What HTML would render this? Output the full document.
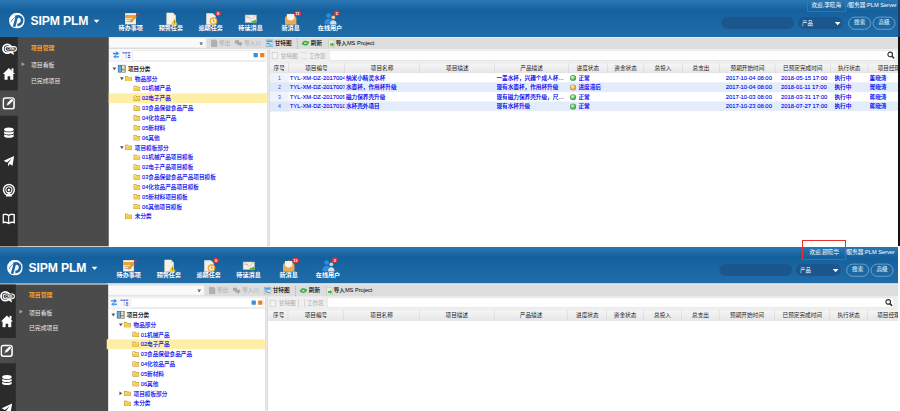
<!DOCTYPE html>
<html lang="zh-CN"><head><meta charset="utf-8"><title>SIPM PLM</title>
<style>
*{box-sizing:border-box}
html,body{margin:0;padding:0;overflow:hidden}
html{width:900px;height:411px}
body{width:900px;height:411px;overflow:hidden;background:#fff;position:relative;font-family:"Liberation Sans","Noto Sans CJK SC",sans-serif}
.scr{position:absolute;width:1920px;transform:scale(0.46875);transform-origin:0 0;overflow:hidden;background:#fff;font-size:12px;color:#000}
.scr div,.scr span,.scr svg{position:absolute}
.hdr{left:0;top:0;width:1920px;height:79px;background:linear-gradient(to bottom,#2b77b2 0px,#236fab 8px,#14609c 23px,#1a66a2 45px,#206ca8 79px)}
.logo{left:19px;top:27px;width:34px;height:34px}
.brand{left:65px;top:29px;font-weight:bold;font-size:26px;color:#fff;letter-spacing:-0.3px;line-height:30px;white-space:nowrap}
.tri{width:0;height:0;border-left:6.5px solid transparent;border-right:6.5px solid transparent;border-top:7px solid #fff}
.hi{top:27px;width:26px;height:26px;overflow:visible}
.hl{top:52px;width:90px;text-align:center;color:#fff;font-size:13px;font-weight:bold;line-height:16px;white-space:nowrap}
.wel{top:2px;color:#fff;font-size:12px;line-height:16px;white-space:nowrap}
.sin{background:#1b568c;border-radius:13px;top:36px;height:26px}
.pill{top:36px;height:27px;border:1.5px solid #c9dcec;border-radius:14px;color:#fff;font-size:12px;line-height:23px;text-align:center}
.tb{left:232px;top:79px;width:1688px;height:26px;background:#dddddd;border-top:2.5px solid #e6ecee}
.tbt{top:84px;font-size:12px;line-height:16px;white-space:nowrap;font-weight:500}
.side0{left:0;top:79px;width:37.5px;background:#2b2b2b}
.side1{left:0;top:79px;width:232px;background:#4b4b4b}
.sm{left:66px;font-size:12.5px;color:#e8e8e8;line-height:16px;white-space:nowrap}
.trow{left:232px;width:338px;height:21px}
.tn{font-size:12px;line-height:21px;top:1px;color:#0000f0;font-weight:400;-webkit-text-stroke:0.2px;white-space:nowrap}
.gh{top:133.5px;height:22.5px;font-size:12px;line-height:25px;text-align:center;color:#222;white-space:nowrap;border-right:1px solid #d0d0d0}
.gc{font-size:12px;line-height:20px;color:#0000f0;font-weight:500;-webkit-text-stroke:0.2px #0000f0;white-space:nowrap;overflow:hidden;text-overflow:ellipsis;height:20px;top:0}
</style></head><body>
<div class="scr" style="left:0;top:0;height:526px"><div class="hdr"></div><svg class="logo" viewBox="0 0 34 34"><circle cx="17" cy="17" r="16.6" fill="#fff"/><path d="M14 9C22 5.5 28.800 10.5 28 17.5C27.3 22.5 23.5 25.800 18 26.5" fill="none" stroke="#1d67a5" stroke-width="5.6"/><path d="M17 8.5L11 30" stroke="#1d67a5" stroke-width="5.4" fill="none"/><path d="M4.5 20C7 14 11 10.5 15 9" stroke="#1d67a5" stroke-width="1.5" fill="none"/></svg><div class="brand">SIPM PLM</div><div class="tri" style="left:200px;top:42px"></div><svg class="hi" style="left:267px" viewBox="0 0 26 26"><rect x="0" y="1" width="23" height="24" fill="#f4f1ea"/><rect x="0" y="5" width="23" height="7" fill="#f0a030"/><rect x="3" y="14" width="14" height="2" fill="#b8a890"/><rect x="3" y="18" width="14" height="2" fill="#b8a890"/><path d="M22 6l3 3-11 11-4 1 1-4z" fill="#e8901c"/><circle cx="26.5" cy="3" r="2.6" fill="#e53030"/></svg><div class="hl" style="left:234px">待办事项</div><svg class="hi" style="left:352.5px" viewBox="0 0 26 26"><path d="M2 0h14l6 6v20H2z" fill="#f6f1e4"/><path d="M16 0l6 6h-6z" fill="#d8d0bc"/><path d="M19 12l7 14H12z" fill="#f2c830"/><rect x="18.3" y="17" width="1.5" height="5" fill="#7a5a10"/></svg><div class="hl" style="left:319.5px">预警任务</div><svg class="hi" style="left:437.5px;overflow:visible" viewBox="0 0 26 26"><path d="M2 1h14l6 6v19H2z" fill="#f3efe6"/><circle cx="17.5" cy="18" r="7" fill="#f6e9c8" stroke="#e8a020" stroke-width="2.4"/><path d="M17.5 14v4.5h3" stroke="#b07818" stroke-width="1.3" fill="none"/><ellipse cx="27.3" cy="1.4" rx="6" ry="5.5" fill="#e53030"/><text x="27.3" y="4.6" font-size="8.5" font-weight="bold" fill="#fff" text-anchor="middle" font-family="Liberation Sans, sans-serif">0</text></svg><div class="hl" style="left:404.5px">逾期任务</div><svg class="hi" style="left:522.5px" viewBox="0 0 26 26"><rect x="0" y="5" width="24" height="16" fill="#f1efe8" stroke="#c8c4b4" stroke-width="1"/><path d="M0 5l12 9 12-9" fill="none" stroke="#b5b09c" stroke-width="1.2"/><rect x="3" y="9" width="7" height="2" fill="#e0b090"/><path d="M14 17h6v-3l6 5-6 5v-3h-6z" fill="#5cb030"/></svg><div class="hl" style="left:489.5px">待读消息</div><svg class="hi" style="left:608px;overflow:visible" viewBox="0 0 26 26"><path d="M0 9l12-8 12 8v16H0z" fill="#d89648"/><rect x="4" y="3" width="16" height="14" fill="#f7f4ee"/><path d="M0 10l12 9 12-9v15H0z" fill="#e8aa58"/><rect x="19.800" y="-4.2" width="14.6" height="11.2" rx="5.4" fill="#e53030"/><text x="27.100" y="4.6" font-size="8.5" font-weight="bold" fill="#fff" text-anchor="middle" font-family="Liberation Sans, sans-serif">11</text></svg><div class="hl" style="left:575px">新消息</div><svg class="hi" style="left:692px;overflow:visible" viewBox="0 0 26 26"><circle cx="9" cy="6" r="5" fill="#2f8de0"/><path d="M0 24c0-8 4-11 9-11s9 3 9 11z" fill="#2f8de0"/><circle cx="19" cy="10" r="4" fill="#e8c8a8"/><path d="M12 25c0-6 3-9 7-9s7 3 7 9z" fill="#d8dde4"/><ellipse cx="26.5" cy="0.900" rx="6" ry="5.6" fill="#e53030"/><text x="26.5" y="4" font-size="8.5" font-weight="bold" fill="#fff" text-anchor="middle" font-family="Liberation Sans, sans-serif">2</text></svg><div class="hl" style="left:659px">在线用户</div><div class="wel" style="left:1731px">欢迎,李晓海</div><div class="wel" style="left:1807px">/服务器:PLM Server</div><div class="sin" style="left:1539px;width:155px"></div><div class="sin" style="left:1702px;width:96px"></div><div class="wel" style="left:1711px;top:41.5px;font-size:11.5px">产品</div><div class="tri" style="left:1781px;top:47px;border-left-width:6px;border-right-width:6px;border-top-width:7px"></div><div class="pill" style="left:1810px;width:48px">搜索</div><div class="pill" style="left:1862px;width:48px">高级</div><div class="tb"></div><div style="left:0;top:0px;width:1920px;height:526px"><div style="left:232px;top:81px;width:208px;height:21px;background:#fafafa;border:1px solid #e4e4e4"></div><div style="left:426px;top:85px;font-size:11px;line-height:12px;color:#333;font-weight:bold">v</div><svg style="left:450px;top:84px" width="14" height="16" viewBox="0 0 14 16"><path d="M0 0h10l4 4v12H0z" fill="#b0b0b0"/></svg><div class="tbt" style="left:467px;color:#b4b4b4">导出</div><svg style="left:501px;top:84px" width="16" height="16" viewBox="0 0 16 16"><path d="M0 2h9v7H0z M5 6h11v6h-3v3l-4-3H5z" fill="#a8a8a8"/></svg><div class="tbt" style="left:521px;color:#b4b4b4">导入(I)</div><svg style="left:567px;top:84px" width="16" height="16" viewBox="0 0 16 16"><rect x="0.5" y="0.5" width="15" height="15" fill="#cfe3f6" stroke="#4a82c0"/><rect x="2" y="2" width="12" height="4" fill="#5b9bd5"/><rect x="3" y="8" width="5" height="2" fill="#3b6ea8"/><rect x="6" y="11" width="7" height="2" fill="#6aa84f"/></svg><div class="tbt" style="left:586px">甘特图</div><div style="left:634px;top:82px;width:0;height:22px;border-left:1.5px dashed #888"></div><svg style="left:643px;top:86px" width="17" height="12" viewBox="0 0 16 16" preserveAspectRatio="none"><path d="M2 7a6 6 0 0 1 11-3l2-1v6h-6l2-2a3.5 3.5 0 0 0-6 0z" fill="#2fae3c"/><path d="M14 9a6 6 0 0 1-11 3l-2 1V7h6l-2 2a3.5 3.5 0 0 0 6 0z" fill="#2fae3c"/></svg><div class="tbt" style="left:663px">刷新</div><svg style="left:700px;top:85px" width="14" height="16" viewBox="0 0 14 16"><path d="M1 0h9l3 3v13H1z" fill="#e9efe4" stroke="#9ab08a" stroke-width="1"/><path d="M4 8h4V5l5 5-5 5v-3H4z" fill="#55b13a"/></svg><div class="tbt" style="left:716px">导入MS Project</div><div style="left:232px;top:105px;width:338px;height:26px;background:#f8f8f8;border-bottom:1px solid #dedede"></div><svg style="left:240px;top:109px" width="15" height="16" viewBox="0 0 15 16"><path d="M1 3.5h7V0.5l6 4.5-6 4.5v-3H1z" fill="#2d86e4"/><path d="M14 10.5H7v-3L1 12l6 4v-2.5h7z" fill="#4a9cf0"/></svg><svg style="left:261px;top:109px" width="18" height="16" viewBox="0 0 18 16"><path d="M0 2h5v3H0zM6 2h5v3H6zM12 2h5v3h-5z" fill="#6a7be0"/><path d="M12 8h5v3h-5zM12 12.5h5v3h-5z" fill="#4a6be0"/><path d="M8 5v9h4" fill="none" stroke="#8aa0e8" stroke-width="1.2"/></svg><div style="left:283px;top:107px;width:284px;height:22px;background:#fff;border:1px solid #dadada"></div><div style="left:541px;top:113px;width:9px;height:9px;background:#2f8fe0;border-radius:1px"></div><div style="left:555px;top:113px;width:9px;height:9px;background:#f0801c;border-radius:1px"></div><div style="left:576px;top:105px;width:1344px;height:28.5px;background:#efefef"></div><div style="left:580px;top:112px;width:13px;height:14px;border:1.5px solid #b8b8b8;background:#f4f4f4"></div><div class="tbt" style="left:599px;top:111.5px;color:#b4b4b4">甘特图</div><div style="left:641px;top:112px;width:13px;height:14px;border-top:1.5px solid #c8c8c8;border-bottom:1.5px solid #c8c8c8"></div><div class="tbt" style="left:659px;top:111.5px;color:#b4b4b4">工作区</div><div style="left:702px;top:107px;width:1210px;height:22px;background:#fff;border:1px solid #d4d4d4"></div><svg style="left:1892px;top:109px" width="17" height="17" viewBox="0 0 18 18"><circle cx="7.5" cy="7.5" r="5.2" fill="none" stroke="#333" stroke-width="2.6"/><path d="M11.5 11.5l5 5" stroke="#333" stroke-width="3.4"/></svg><div style="left:0;top:0;width:232px;height:526px"><div class="side1" style="height:447px;width:232px"></div><div class="side0" style="height:447px"></div><div style="left:0;top:193px;width:38px;height:54px;background:#4b4b4b"></div><svg style="left:3px;top:90px" width="34" height="30" viewBox="0 0 34 30"><circle cx="12.6" cy="13.900" r="9.3" fill="none" stroke="#fff" stroke-width="3.800"/><path d="M17 21.5l10 6-2-8z" fill="#fff"/><rect x="8" y="9.2" width="24" height="10" rx="5" fill="#2b2b2b" stroke="#fff" stroke-width="2.2"/><text x="20" y="17" font-size="7" font-weight="bold" text-anchor="middle" fill="#fff" font-family="Liberation Sans, sans-serif">CRM</text></svg><svg style="left:6px;top:144px" width="26" height="27" viewBox="0 0 28 29"><path d="M14 1L0 15h4v13h7v-8h6v8h7V15h4z" fill="#fff"/><rect x="20" y="2" width="4.5" height="8" fill="#fff"/></svg><svg style="left:5px;top:206px" width="28" height="28" viewBox="0 0 28 28"><rect x="2" y="3" width="23" height="23" rx="4.5" fill="none" stroke="#fff" stroke-width="3.4"/><path d="M8 20l2.5-7 9.5-9.5 4.5 4.5L15 17.5z" fill="#fff" stroke="#4b4b4b" stroke-width="1.4"/></svg><svg style="left:8px;top:271px" width="22" height="25" viewBox="0 0 28 30"><ellipse cx="14" cy="6" rx="13" ry="5.5" fill="#fff"/><path d="M1 10.5c2 4 24 4 26 0v5.5c-2 4.5-24 4.5-26 0z" fill="#fff"/><path d="M1 19c2 4 24 4 26 0v5.5c-2 4.5-24 4.5-26 0z" fill="#fff"/></svg><svg style="left:7px;top:332px" width="24" height="24" viewBox="0 0 28 28"><path d="M27 1L1 13l8 4 12-10-9 12v8l4-6 7 4z" fill="#fff"/></svg><svg style="left:4px;top:391px" width="30" height="30" viewBox="0 0 30 30"><circle cx="15" cy="14" r="11.5" fill="none" stroke="#fff" stroke-width="3"/><circle cx="15" cy="14" r="6.5" fill="none" stroke="#fff" stroke-width="2.2"/><circle cx="15" cy="14" r="2.6" fill="#fff"/><path d="M8 28l7-11 7 11z" fill="#fff"/></svg><svg style="left:5px;top:455px" width="27" height="24" viewBox="0 0 30 26"><path d="M2 3c5-2 9-1 13 2 4-3 8-4 13-2v19c-5-2-9-1-13 2-4-3-8-4-13-2z" fill="none" stroke="#fff" stroke-width="3.4"/><path d="M15 5v19" stroke="#fff" stroke-width="2.800"/></svg><div class="sm" style="top:94px;color:#f0a42a;font-weight:bold">项目管理</div><div style="left:46px;top:133px;width:0;height:0;border-top:4.5px solid transparent;border-bottom:4.5px solid transparent;border-left:7px solid #a8a8a8"></div><div class="sm" style="top:131px">项目看板</div><div class="sm" style="top:165px">已完成项目</div></div><div style="left:570px;top:105px;width:6px;height:421px;background:#e8e8e8;border-left:1px solid #d0d0d0;border-right:1px solid #d0d0d0"></div><div class="trow" style="top:136px;"><div style="left:0.0px;top:0;width:330px;height:21px"><div class="tri" style="left:8px;top:8px;border-left-width:4px;border-right-width:4px;border-top:6px solid #555"></div><svg style="left:19px;top:2px" width="18" height="17" viewBox="0 0 16 17" preserveAspectRatio="none"><rect x="0" y="0" width="15" height="17" fill="#4a5a6a"/><rect x="1.5" y="1.5" width="5" height="14" fill="#58b0e8"/><rect x="8" y="1.5" width="5.5" height="14" fill="#e8e0c0"/><rect x="8" y="9" width="5.5" height="3" fill="#d08030"/></svg><div class="tn" style="left:41px;color:#000">项目分类</div></div></div><div class="trow" style="top:157px;"><div style="left:0.0px;top:0;width:330px;height:21px"><div class="tri" style="left:24px;top:8px;border-left-width:4px;border-right-width:4px;border-top:6px solid #555"></div><svg style="left:34px;top:2px" width="16" height="16" viewBox="0 0 16 16"><path d="M1 3h5.5l1.5 2H15v9H1z" fill="#a87c14"/><path d="M2 4h4l1.5 2H14v7H2z" fill="#f9e27e"/><path d="M2 7.5h12V13H2z" fill="#f3cf4e"/></svg><div class="tn" style="left:55.5px">物品部分</div></div></div><div class="trow" style="top:178px;"><div style="left:0.0px;top:0;width:330px;height:21px"><svg style="left:52px;top:2px" width="16" height="16" viewBox="0 0 16 16"><path d="M1 3h5.5l1.5 2H15v9H1z" fill="#a87c14"/><path d="M2 4h4l1.5 2H14v7H2z" fill="#f9e27e"/><path d="M2 7.5h12V13H2z" fill="#f3cf4e"/></svg><div class="tn" style="left:71px">01机械产品</div></div></div><div class="trow" style="top:199px;background:#ffeea6;"><div style="left:0.0px;top:0;width:330px;height:21px"><svg style="left:52px;top:2px" width="16" height="16" viewBox="0 0 16 16"><path d="M1 3h5.5l1.5 2H15v9H1z" fill="#a87c14"/><path d="M2 4h4l1.5 2H14v7H2z" fill="#f9e27e"/><path d="M2 7.5h12V13H2z" fill="#f3cf4e"/></svg><div class="tn" style="left:71px">02电子产品</div></div></div><div class="trow" style="top:220px;"><div style="left:0.0px;top:0;width:330px;height:21px"><svg style="left:52px;top:2px" width="16" height="16" viewBox="0 0 16 16"><path d="M1 3h5.5l1.5 2H15v9H1z" fill="#a87c14"/><path d="M2 4h4l1.5 2H14v7H2z" fill="#f9e27e"/><path d="M2 7.5h12V13H2z" fill="#f3cf4e"/></svg><div class="tn" style="left:71px">03食品保健食品产品</div></div></div><div class="trow" style="top:241px;"><div style="left:0.0px;top:0;width:330px;height:21px"><svg style="left:52px;top:2px" width="16" height="16" viewBox="0 0 16 16"><path d="M1 3h5.5l1.5 2H15v9H1z" fill="#a87c14"/><path d="M2 4h4l1.5 2H14v7H2z" fill="#f9e27e"/><path d="M2 7.5h12V13H2z" fill="#f3cf4e"/></svg><div class="tn" style="left:71px">04化妆品产品</div></div></div><div class="trow" style="top:262px;"><div style="left:0.0px;top:0;width:330px;height:21px"><svg style="left:52px;top:2px" width="16" height="16" viewBox="0 0 16 16"><path d="M1 3h5.5l1.5 2H15v9H1z" fill="#a87c14"/><path d="M2 4h4l1.5 2H14v7H2z" fill="#f9e27e"/><path d="M2 7.5h12V13H2z" fill="#f3cf4e"/></svg><div class="tn" style="left:71px">05新材料</div></div></div><div class="trow" style="top:283px;"><div style="left:0.0px;top:0;width:330px;height:21px"><svg style="left:52px;top:2px" width="16" height="16" viewBox="0 0 16 16"><path d="M1 3h5.5l1.5 2H15v9H1z" fill="#a87c14"/><path d="M2 4h4l1.5 2H14v7H2z" fill="#f9e27e"/><path d="M2 7.5h12V13H2z" fill="#f3cf4e"/></svg><div class="tn" style="left:71px">06其他</div></div></div><div class="trow" style="top:304px;"><div style="left:0.0px;top:0;width:330px;height:21px"><div class="tri" style="left:24px;top:8px;border-left-width:4px;border-right-width:4px;border-top:6px solid #555"></div><svg style="left:34px;top:2px" width="16" height="16" viewBox="0 0 16 16"><path d="M1 3h5.5l1.5 2H15v9H1z" fill="#a87c14"/><path d="M2 4h4l1.5 2H14v7H2z" fill="#f9e27e"/><path d="M2 7.5h12V13H2z" fill="#f3cf4e"/></svg><div class="tn" style="left:55.5px">项目模板部分</div></div></div><div class="trow" style="top:325px;"><div style="left:0.0px;top:0;width:330px;height:21px"><svg style="left:52px;top:2px" width="16" height="16" viewBox="0 0 16 16"><path d="M1 3h5.5l1.5 2H15v9H1z" fill="#a87c14"/><path d="M2 4h4l1.5 2H14v7H2z" fill="#f9e27e"/><path d="M2 7.5h12V13H2z" fill="#f3cf4e"/></svg><div class="tn" style="left:71px">01机械产品项目模板</div></div></div><div class="trow" style="top:346px;"><div style="left:0.0px;top:0;width:330px;height:21px"><svg style="left:52px;top:2px" width="16" height="16" viewBox="0 0 16 16"><path d="M1 3h5.5l1.5 2H15v9H1z" fill="#a87c14"/><path d="M2 4h4l1.5 2H14v7H2z" fill="#f9e27e"/><path d="M2 7.5h12V13H2z" fill="#f3cf4e"/></svg><div class="tn" style="left:71px">02电子产品项目模板</div></div></div><div class="trow" style="top:367px;"><div style="left:0.0px;top:0;width:330px;height:21px"><svg style="left:52px;top:2px" width="16" height="16" viewBox="0 0 16 16"><path d="M1 3h5.5l1.5 2H15v9H1z" fill="#a87c14"/><path d="M2 4h4l1.5 2H14v7H2z" fill="#f9e27e"/><path d="M2 7.5h12V13H2z" fill="#f3cf4e"/></svg><div class="tn" style="left:71px">03食品保健食品产品项目模板</div></div></div><div class="trow" style="top:388px;"><div style="left:0.0px;top:0;width:330px;height:21px"><svg style="left:52px;top:2px" width="16" height="16" viewBox="0 0 16 16"><path d="M1 3h5.5l1.5 2H15v9H1z" fill="#a87c14"/><path d="M2 4h4l1.5 2H14v7H2z" fill="#f9e27e"/><path d="M2 7.5h12V13H2z" fill="#f3cf4e"/></svg><div class="tn" style="left:71px">04化妆品产品项目模板</div></div></div><div class="trow" style="top:409px;"><div style="left:0.0px;top:0;width:330px;height:21px"><svg style="left:52px;top:2px" width="16" height="16" viewBox="0 0 16 16"><path d="M1 3h5.5l1.5 2H15v9H1z" fill="#a87c14"/><path d="M2 4h4l1.5 2H14v7H2z" fill="#f9e27e"/><path d="M2 7.5h12V13H2z" fill="#f3cf4e"/></svg><div class="tn" style="left:71px">05新材料项目模板</div></div></div><div class="trow" style="top:430px;"><div style="left:0.0px;top:0;width:330px;height:21px"><svg style="left:52px;top:2px" width="16" height="16" viewBox="0 0 16 16"><path d="M1 3h5.5l1.5 2H15v9H1z" fill="#a87c14"/><path d="M2 4h4l1.5 2H14v7H2z" fill="#f9e27e"/><path d="M2 7.5h12V13H2z" fill="#f3cf4e"/></svg><div class="tn" style="left:71px">06其他项目模板</div></div></div><div class="trow" style="top:451px;"><div style="left:0.0px;top:0;width:330px;height:21px"><svg style="left:34px;top:2px" width="16" height="16" viewBox="0 0 16 16"><path d="M1 3h5.5l1.5 2H15v9H1z" fill="#a87c14"/><path d="M2 4h4l1.5 2H14v7H2z" fill="#f9e27e"/><path d="M2 7.5h12V13H2z" fill="#f3cf4e"/></svg><div class="tn" style="left:55.5px">未分类</div></div></div><div style="left:576px;top:133.5px;width:1344px;height:22.5px;background:linear-gradient(#f6f6f6,#e7e7e7);border-bottom:1px solid #d0d0d0;border-top:1px solid #dcdcdc"></div><div class="gh" style="left:576px;width:40px">序号</div><div class="gh" style="left:616px;width:119px">项目编号</div><div class="gh" style="left:735px;width:161px">项目名称</div><div class="gh" style="left:896px;width:160px">项目描述</div><div class="gh" style="left:1056px;width:157px">产品描述</div><div class="gh" style="left:1213px;width:83px">进度状态</div><div class="gh" style="left:1296px;width:78px">资金状态</div><div class="gh" style="left:1374px;width:82px">总投入</div><div class="gh" style="left:1456px;width:80px">总支出</div><div class="gh" style="left:1536px;width:118px">预期开始时间</div><div class="gh" style="left:1654px;width:118px">已预定完成时间</div><div class="gh" style="left:1772px;width:80px">执行状态</div><div class="gh" style="left:1852px;width:90px">项目经理</div><div style="left:576px;top:156.00px;width:1344px;height:20.35px;background:#fff;border-bottom:1px solid #eef1f6"><div style="left:0;top:0;width:40px;height:21px;background:#eef2fb"></div><div class="gc" style="left:0px;width:40px;text-align:center;color:#3048e0;font-size:11px;-webkit-text-stroke:0;">1</div><div class="gc" style="left:42px;width:117px;font-size:12.5px;text-overflow:clip;">TYL-XM-DZ-2017004</div><div class="gc" style="left:162px;width:158px;">纳米小精灵水杯</div><div class="gc" style="left:483px;width:154px;width:152px;">一盖水杯，兴趣个成人杯、1...</div><div style="left:640px;top:4px;width:13px;height:13px;border-radius:7px;background:radial-gradient(circle at 40% 35%,#fff8 0,#3cae3c 60%);border:1.5px solid rgba(90,90,90,.55)"></div><div class="gc" style="left:658px;width:62px;">正常</div><div class="gc" style="left:972px;width:106px;font-size:12.5px;">2017-10-04 08:00</div><div class="gc" style="left:1090px;width:106px;font-size:12.5px;">2018-05-15 17:00</div><div class="gc" style="left:1204px;width:72px;">执行中</div><div class="gc" style="left:1279px;width:87px;">董晓涛</div></div><div style="left:576px;top:176.35px;width:1344px;height:20.35px;background:#e3ecfb;border-bottom:1px solid #eef1f6"><div style="left:0;top:0;width:40px;height:21px;background:#dfe8f8"></div><div class="gc" style="left:0px;width:40px;text-align:center;color:#3048e0;font-size:11px;-webkit-text-stroke:0;">2</div><div class="gc" style="left:42px;width:117px;font-size:12.5px;text-overflow:clip;">TYL-XM-DZ-2017007</div><div class="gc" style="left:162px;width:158px;">水壶杯，作用杯升级</div><div class="gc" style="left:483px;width:154px;width:152px;">现有水壶杯，作用杯升级</div><div style="left:640px;top:4px;width:13px;height:13px;border-radius:7px;background:radial-gradient(circle at 40% 35%,#fff8 0,#f0a020 60%);border:1.5px solid rgba(90,90,90,.55)"></div><div class="gc" style="left:658px;width:62px;">进度滞后</div><div class="gc" style="left:972px;width:106px;font-size:12.5px;">2017-10-04 08:00</div><div class="gc" style="left:1090px;width:106px;font-size:12.5px;">2018-01-11 17:00</div><div class="gc" style="left:1204px;width:72px;">执行中</div><div class="gc" style="left:1279px;width:87px;">贺晓涛</div></div><div style="left:576px;top:196.70px;width:1344px;height:20.35px;background:#fff;border-bottom:1px solid #eef1f6"><div style="left:0;top:0;width:40px;height:21px;background:#eef2fb"></div><div class="gc" style="left:0px;width:40px;text-align:center;color:#3048e0;font-size:11px;-webkit-text-stroke:0;">3</div><div class="gc" style="left:42px;width:117px;font-size:12.5px;text-overflow:clip;">TYL-XM-DZ-2017009</div><div class="gc" style="left:162px;width:158px;">磁力保养壳升级</div><div class="gc" style="left:483px;width:154px;width:152px;">现有磁力保养壳升级，尺寸...</div><div style="left:640px;top:4px;width:13px;height:13px;border-radius:7px;background:radial-gradient(circle at 40% 35%,#fff8 0,#3cae3c 60%);border:1.5px solid rgba(90,90,90,.55)"></div><div class="gc" style="left:658px;width:62px;">正常</div><div class="gc" style="left:972px;width:106px;font-size:12.5px;">2017-10-03 08:00</div><div class="gc" style="left:1090px;width:106px;font-size:12.5px;">2018-03-31 17:00</div><div class="gc" style="left:1204px;width:72px;">执行中</div><div class="gc" style="left:1279px;width:87px;">蒋晓涛</div></div><div style="left:576px;top:217.05px;width:1344px;height:20.35px;background:#e3ecfb;border-bottom:1px solid #eef1f6"><div style="left:0;top:0;width:40px;height:21px;background:#dfe8f8"></div><div class="gc" style="left:0px;width:40px;text-align:center;color:#3048e0;font-size:11px;-webkit-text-stroke:0;">4</div><div class="gc" style="left:42px;width:117px;font-size:12.5px;text-overflow:clip;">TYL-XM-DZ-2017010</div><div class="gc" style="left:162px;width:158px;">水杯壳外项目</div><div class="gc" style="left:483px;width:154px;width:152px;">现有水杯升级</div><div style="left:640px;top:4px;width:13px;height:13px;border-radius:7px;background:radial-gradient(circle at 40% 35%,#fff8 0,#3cae3c 60%);border:1.5px solid rgba(90,90,90,.55)"></div><div class="gc" style="left:658px;width:62px;">正常</div><div class="gc" style="left:972px;width:106px;font-size:12.5px;">2017-10-23 08:00</div><div class="gc" style="left:1090px;width:106px;font-size:12.5px;">2018-07-27 17:00</div><div class="gc" style="left:1204px;width:72px;">执行中</div><div class="gc" style="left:1279px;width:87px;">蒋晓涛</div></div></div></div>
<div style="position:absolute;left:898.4px;top:0;width:1.6px;height:36.6px;background:#163f6c"></div>
<div style="position:absolute;left:898.4px;top:36.6px;width:1.2px;height:209.700px;background:#111"></div>
<div class="scr" style="left:-1.700px;top:246.800px;height:350px"><div class="hdr" style="height:77.5px"></div><svg class="logo" viewBox="0 0 34 34"><circle cx="17" cy="17" r="16.6" fill="#fff"/><path d="M14 9C22 5.5 28.800 10.5 28 17.5C27.3 22.5 23.5 25.800 18 26.5" fill="none" stroke="#1d67a5" stroke-width="5.6"/><path d="M17 8.5L11 30" stroke="#1d67a5" stroke-width="5.4" fill="none"/><path d="M4.5 20C7 14 11 10.5 15 9" stroke="#1d67a5" stroke-width="1.5" fill="none"/></svg><div class="brand">SIPM PLM</div><div class="tri" style="left:200px;top:42px"></div><svg class="hi" style="left:267px" viewBox="0 0 26 26"><rect x="0" y="1" width="23" height="24" fill="#f4f1ea"/><rect x="0" y="5" width="23" height="7" fill="#f0a030"/><rect x="3" y="14" width="14" height="2" fill="#b8a890"/><rect x="3" y="18" width="14" height="2" fill="#b8a890"/><path d="M22 6l3 3-11 11-4 1 1-4z" fill="#e8901c"/><circle cx="26.5" cy="3" r="2.6" fill="#e53030"/></svg><div class="hl" style="left:234px">待办事项</div><svg class="hi" style="left:352.5px" viewBox="0 0 26 26"><path d="M2 0h14l6 6v20H2z" fill="#f6f1e4"/><path d="M16 0l6 6h-6z" fill="#d8d0bc"/><path d="M19 12l7 14H12z" fill="#f2c830"/><rect x="18.3" y="17" width="1.5" height="5" fill="#7a5a10"/></svg><div class="hl" style="left:319.5px">预警任务</div><svg class="hi" style="left:437.5px;overflow:visible" viewBox="0 0 26 26"><path d="M2 1h14l6 6v19H2z" fill="#f3efe6"/><circle cx="17.5" cy="18" r="7" fill="#f6e9c8" stroke="#e8a020" stroke-width="2.4"/><path d="M17.5 14v4.5h3" stroke="#b07818" stroke-width="1.3" fill="none"/><ellipse cx="27.3" cy="1.4" rx="6" ry="5.5" fill="#e53030"/><text x="27.3" y="4.6" font-size="8.5" font-weight="bold" fill="#fff" text-anchor="middle" font-family="Liberation Sans, sans-serif">0</text></svg><div class="hl" style="left:404.5px">逾期任务</div><svg class="hi" style="left:522.5px" viewBox="0 0 26 26"><rect x="0" y="5" width="24" height="16" fill="#f1efe8" stroke="#c8c4b4" stroke-width="1"/><path d="M0 5l12 9 12-9" fill="none" stroke="#b5b09c" stroke-width="1.2"/><rect x="3" y="9" width="7" height="2" fill="#e0b090"/><path d="M14 17h6v-3l6 5-6 5v-3h-6z" fill="#5cb030"/></svg><div class="hl" style="left:489.5px">待读消息</div><svg class="hi" style="left:608px;overflow:visible" viewBox="0 0 26 26"><path d="M0 9l12-8 12 8v16H0z" fill="#d89648"/><rect x="4" y="3" width="16" height="14" fill="#f7f4ee"/><path d="M0 10l12 9 12-9v15H0z" fill="#e8aa58"/><rect x="19.800" y="-4.2" width="14.6" height="11.2" rx="5.4" fill="#e53030"/><text x="27.100" y="4.6" font-size="8.5" font-weight="bold" fill="#fff" text-anchor="middle" font-family="Liberation Sans, sans-serif">11</text></svg><div class="hl" style="left:575px">新消息</div><svg class="hi" style="left:692px;overflow:visible" viewBox="0 0 26 26"><circle cx="9" cy="6" r="5" fill="#2f8de0"/><path d="M0 24c0-8 4-11 9-11s9 3 9 11z" fill="#2f8de0"/><circle cx="19" cy="10" r="4" fill="#e8c8a8"/><path d="M12 25c0-6 3-9 7-9s7 3 7 9z" fill="#d8dde4"/><ellipse cx="26.5" cy="0.900" rx="6" ry="5.6" fill="#e53030"/><text x="26.5" y="4" font-size="8.5" font-weight="bold" fill="#fff" text-anchor="middle" font-family="Liberation Sans, sans-serif">2</text></svg><div class="hl" style="left:659px">在线用户</div><div class="wel" style="left:1731px">欢迎,顾晓华</div><div class="wel" style="left:1807px">/服务器:PLM Server</div><div class="sin" style="left:1539px;width:155px"></div><div class="sin" style="left:1702px;width:96px"></div><div class="wel" style="left:1711px;top:41.5px;font-size:11.5px">产品</div><div class="tri" style="left:1781px;top:47px;border-left-width:6px;border-right-width:6px;border-top-width:7px"></div><div class="pill" style="left:1810px;width:48px">搜索</div><div class="pill" style="left:1862px;width:48px">高级</div><div class="tb" style="top:77.5px;height:28px"></div><div style="left:0;top:0.5px;width:1920px;height:352px"><div style="left:232px;top:81px;width:208px;height:21px;background:#fafafa;border:1px solid #e4e4e4"></div><div style="left:426px;top:85px;font-size:11px;line-height:12px;color:#333;font-weight:bold">v</div><svg style="left:450px;top:84px" width="14" height="16" viewBox="0 0 14 16"><path d="M0 0h10l4 4v12H0z" fill="#b0b0b0"/></svg><div class="tbt" style="left:467px;color:#b4b4b4">导出</div><svg style="left:501px;top:84px" width="16" height="16" viewBox="0 0 16 16"><path d="M0 2h9v7H0z M5 6h11v6h-3v3l-4-3H5z" fill="#a8a8a8"/></svg><div class="tbt" style="left:521px;color:#b4b4b4">导入(I)</div><svg style="left:567px;top:84px" width="16" height="16" viewBox="0 0 16 16"><rect x="0.5" y="0.5" width="15" height="15" fill="#cfe3f6" stroke="#4a82c0"/><rect x="2" y="2" width="12" height="4" fill="#5b9bd5"/><rect x="3" y="8" width="5" height="2" fill="#3b6ea8"/><rect x="6" y="11" width="7" height="2" fill="#6aa84f"/></svg><div class="tbt" style="left:586px">甘特图</div><div style="left:634px;top:82px;width:0;height:22px;border-left:1.5px dashed #888"></div><svg style="left:643px;top:86px" width="17" height="12" viewBox="0 0 16 16" preserveAspectRatio="none"><path d="M2 7a6 6 0 0 1 11-3l2-1v6h-6l2-2a3.5 3.5 0 0 0-6 0z" fill="#2fae3c"/><path d="M14 9a6 6 0 0 1-11 3l-2 1V7h6l-2 2a3.5 3.5 0 0 0 6 0z" fill="#2fae3c"/></svg><div class="tbt" style="left:663px">刷新</div><svg style="left:700px;top:85px" width="14" height="16" viewBox="0 0 14 16"><path d="M1 0h9l3 3v13H1z" fill="#e9efe4" stroke="#9ab08a" stroke-width="1"/><path d="M4 8h4V5l5 5-5 5v-3H4z" fill="#55b13a"/></svg><div class="tbt" style="left:716px">导入MS Project</div><div style="left:232px;top:105px;width:338px;height:26px;background:#f8f8f8;border-bottom:1px solid #dedede"></div><svg style="left:240px;top:109px" width="15" height="16" viewBox="0 0 15 16"><path d="M1 3.5h7V0.5l6 4.5-6 4.5v-3H1z" fill="#2d86e4"/><path d="M14 10.5H7v-3L1 12l6 4v-2.5h7z" fill="#4a9cf0"/></svg><svg style="left:261px;top:109px" width="18" height="16" viewBox="0 0 18 16"><path d="M0 2h5v3H0zM6 2h5v3H6zM12 2h5v3h-5z" fill="#6a7be0"/><path d="M12 8h5v3h-5zM12 12.5h5v3h-5z" fill="#4a6be0"/><path d="M8 5v9h4" fill="none" stroke="#8aa0e8" stroke-width="1.2"/></svg><div style="left:283px;top:107px;width:284px;height:22px;background:#fff;border:1px solid #dadada"></div><div style="left:541px;top:113px;width:9px;height:9px;background:#2f8fe0;border-radius:1px"></div><div style="left:555px;top:113px;width:9px;height:9px;background:#f0801c;border-radius:1px"></div><div style="left:576px;top:105px;width:1344px;height:28.5px;background:#efefef"></div><div style="left:580px;top:112px;width:13px;height:14px;border:1.5px solid #b8b8b8;background:#f4f4f4"></div><div class="tbt" style="left:599px;top:111.5px;color:#b4b4b4">甘特图</div><div style="left:641px;top:110px;width:13px;height:18px;border-left:1.5px solid #c0c0c0;border-right:1.5px solid #c0c0c0"></div><div class="tbt" style="left:659px;top:111.5px;color:#b4b4b4">工作区</div><div style="left:702px;top:107px;width:1210px;height:22px;background:#fff;border:1px solid #d4d4d4"></div><svg style="left:1892px;top:109px" width="17" height="17" viewBox="0 0 18 18"><circle cx="7.5" cy="7.5" r="5.2" fill="none" stroke="#333" stroke-width="2.6"/><path d="M11.5 11.5l5 5" stroke="#333" stroke-width="3.4"/></svg><div style="left:0;top:0;width:235.2px;height:352px"><div class="side1" style="height:273px;width:235.2px"></div><div class="side0" style="height:273px"></div><div style="left:0;top:193px;width:38px;height:54px;background:#4b4b4b"></div><svg style="left:3px;top:90px" width="34" height="30" viewBox="0 0 34 30"><circle cx="12.6" cy="13.900" r="9.3" fill="none" stroke="#fff" stroke-width="3.800"/><path d="M17 21.5l10 6-2-8z" fill="#fff"/><rect x="8" y="9.2" width="24" height="10" rx="5" fill="#2b2b2b" stroke="#fff" stroke-width="2.2"/><text x="20" y="17" font-size="7" font-weight="bold" text-anchor="middle" fill="#fff" font-family="Liberation Sans, sans-serif">CRM</text></svg><svg style="left:6px;top:144px" width="26" height="27" viewBox="0 0 28 29"><path d="M14 1L0 15h4v13h7v-8h6v8h7V15h4z" fill="#fff"/><rect x="20" y="2" width="4.5" height="8" fill="#fff"/></svg><svg style="left:5px;top:206px" width="28" height="28" viewBox="0 0 28 28"><rect x="2" y="3" width="23" height="23" rx="4.5" fill="none" stroke="#fff" stroke-width="3.4"/><path d="M8 20l2.5-7 9.5-9.5 4.5 4.5L15 17.5z" fill="#fff" stroke="#4b4b4b" stroke-width="1.4"/></svg><svg style="left:8px;top:271px" width="22" height="25" viewBox="0 0 28 30"><ellipse cx="14" cy="6" rx="13" ry="5.5" fill="#fff"/><path d="M1 10.5c2 4 24 4 26 0v5.5c-2 4.5-24 4.5-26 0z" fill="#fff"/><path d="M1 19c2 4 24 4 26 0v5.5c-2 4.5-24 4.5-26 0z" fill="#fff"/></svg><svg style="left:7px;top:332px" width="24" height="24" viewBox="0 0 28 28"><path d="M27 1L1 13l8 4 12-10-9 12v8l4-6 7 4z" fill="#fff"/></svg><svg style="left:4px;top:391px" width="30" height="30" viewBox="0 0 30 30"><circle cx="15" cy="14" r="11.5" fill="none" stroke="#fff" stroke-width="3"/><circle cx="15" cy="14" r="6.5" fill="none" stroke="#fff" stroke-width="2.2"/><circle cx="15" cy="14" r="2.6" fill="#fff"/><path d="M8 28l7-11 7 11z" fill="#fff"/></svg><svg style="left:5px;top:455px" width="27" height="24" viewBox="0 0 30 26"><path d="M2 3c5-2 9-1 13 2 4-3 8-4 13-2v19c-5-2-9-1-13 2-4-3-8-4-13-2z" fill="none" stroke="#fff" stroke-width="3.4"/><path d="M15 5v19" stroke="#fff" stroke-width="2.800"/></svg><div class="sm" style="top:94px;color:#f0a42a;font-weight:bold">项目管理</div><div style="left:46px;top:133px;width:0;height:0;border-top:4.5px solid transparent;border-bottom:4.5px solid transparent;border-left:7px solid #a8a8a8"></div><div class="sm" style="top:131px">项目看板</div><div class="sm" style="top:165px">已完成项目</div></div><div style="left:570px;top:105px;width:6px;height:247px;background:#e8e8e8;border-left:1px solid #d0d0d0;border-right:1px solid #d0d0d0"></div><div class="trow" style="top:133.2px;"><div style="left:1.6px;top:0;width:330px;height:21px"><div class="tri" style="left:8px;top:8px;border-left-width:4px;border-right-width:4px;border-top:6px solid #555"></div><svg style="left:19px;top:2px" width="18" height="17" viewBox="0 0 16 17" preserveAspectRatio="none"><rect x="0" y="0" width="15" height="17" fill="#4a5a6a"/><rect x="1.5" y="1.5" width="5" height="14" fill="#58b0e8"/><rect x="8" y="1.5" width="5.5" height="14" fill="#e8e0c0"/><rect x="8" y="9" width="5.5" height="3" fill="#d08030"/></svg><div class="tn" style="left:41px;color:#000">项目分类</div></div></div><div class="trow" style="top:154.2px;"><div style="left:1.6px;top:0;width:330px;height:21px"><div class="tri" style="left:24px;top:8px;border-left-width:4px;border-right-width:4px;border-top:6px solid #555"></div><svg style="left:34px;top:2px" width="16" height="16" viewBox="0 0 16 16"><path d="M1 3h5.5l1.5 2H15v9H1z" fill="#a87c14"/><path d="M2 4h4l1.5 2H14v7H2z" fill="#f9e27e"/><path d="M2 7.5h12V13H2z" fill="#f3cf4e"/></svg><div class="tn" style="left:55.5px">物品部分</div></div></div><div class="trow" style="top:175.2px;"><div style="left:1.6px;top:0;width:330px;height:21px"><svg style="left:52px;top:2px" width="16" height="16" viewBox="0 0 16 16"><path d="M1 3h5.5l1.5 2H15v9H1z" fill="#a87c14"/><path d="M2 4h4l1.5 2H14v7H2z" fill="#f9e27e"/><path d="M2 7.5h12V13H2z" fill="#f3cf4e"/></svg><div class="tn" style="left:71px">01机械产品</div></div></div><div class="trow" style="top:196.2px;background:#ffeea6;"><div style="left:1.6px;top:0;width:330px;height:21px"><svg style="left:52px;top:2px" width="16" height="16" viewBox="0 0 16 16"><path d="M1 3h5.5l1.5 2H15v9H1z" fill="#a87c14"/><path d="M2 4h4l1.5 2H14v7H2z" fill="#f9e27e"/><path d="M2 7.5h12V13H2z" fill="#f3cf4e"/></svg><div class="tn" style="left:71px">02电子产品</div></div></div><div class="trow" style="top:217.2px;"><div style="left:1.6px;top:0;width:330px;height:21px"><svg style="left:52px;top:2px" width="16" height="16" viewBox="0 0 16 16"><path d="M1 3h5.5l1.5 2H15v9H1z" fill="#a87c14"/><path d="M2 4h4l1.5 2H14v7H2z" fill="#f9e27e"/><path d="M2 7.5h12V13H2z" fill="#f3cf4e"/></svg><div class="tn" style="left:71px">03食品保健食品产品</div></div></div><div class="trow" style="top:238.2px;"><div style="left:1.6px;top:0;width:330px;height:21px"><svg style="left:52px;top:2px" width="16" height="16" viewBox="0 0 16 16"><path d="M1 3h5.5l1.5 2H15v9H1z" fill="#a87c14"/><path d="M2 4h4l1.5 2H14v7H2z" fill="#f9e27e"/><path d="M2 7.5h12V13H2z" fill="#f3cf4e"/></svg><div class="tn" style="left:71px">04化妆品产品</div></div></div><div class="trow" style="top:259.2px;"><div style="left:1.6px;top:0;width:330px;height:21px"><svg style="left:52px;top:2px" width="16" height="16" viewBox="0 0 16 16"><path d="M1 3h5.5l1.5 2H15v9H1z" fill="#a87c14"/><path d="M2 4h4l1.5 2H14v7H2z" fill="#f9e27e"/><path d="M2 7.5h12V13H2z" fill="#f3cf4e"/></svg><div class="tn" style="left:71px">05新材料</div></div></div><div class="trow" style="top:280.2px;"><div style="left:1.6px;top:0;width:330px;height:21px"><svg style="left:52px;top:2px" width="16" height="16" viewBox="0 0 16 16"><path d="M1 3h5.5l1.5 2H15v9H1z" fill="#a87c14"/><path d="M2 4h4l1.5 2H14v7H2z" fill="#f9e27e"/><path d="M2 7.5h12V13H2z" fill="#f3cf4e"/></svg><div class="tn" style="left:71px">06其他</div></div></div><div class="trow" style="top:301.2px;"><div style="left:1.6px;top:0;width:330px;height:21px"><div style="left:25px;top:6px;width:0;height:0;border-top:4px solid transparent;border-bottom:4px solid transparent;border-left:6px solid #555"></div><svg style="left:34px;top:2px" width="16" height="16" viewBox="0 0 16 16"><path d="M1 3h5.5l1.5 2H15v9H1z" fill="#a87c14"/><path d="M2 4h4l1.5 2H14v7H2z" fill="#f9e27e"/><path d="M2 7.5h12V13H2z" fill="#f3cf4e"/></svg><div class="tn" style="left:55.5px">项目模板部分</div></div></div><div class="trow" style="top:322.2px;"><div style="left:1.6px;top:0;width:330px;height:21px"><svg style="left:34px;top:2px" width="16" height="16" viewBox="0 0 16 16"><path d="M1 3h5.5l1.5 2H15v9H1z" fill="#a87c14"/><path d="M2 4h4l1.5 2H14v7H2z" fill="#f9e27e"/><path d="M2 7.5h12V13H2z" fill="#f3cf4e"/></svg><div class="tn" style="left:55.5px">未分类</div></div></div><div style="left:576px;top:133.5px;width:1344px;height:22.5px;background:linear-gradient(#f6f6f6,#e7e7e7);border-bottom:1px solid #d0d0d0;border-top:1px solid #dcdcdc"></div><div class="gh" style="left:579.2px;width:40px">序号</div><div class="gh" style="left:619.2px;width:119px">项目编号</div><div class="gh" style="left:738.2px;width:161px">项目名称</div><div class="gh" style="left:899.2px;width:160px">项目描述</div><div class="gh" style="left:1059.2px;width:157px">产品描述</div><div class="gh" style="left:1216.2px;width:83px">进度状态</div><div class="gh" style="left:1299.2px;width:78px">资金状态</div><div class="gh" style="left:1377.2px;width:82px">总投入</div><div class="gh" style="left:1459.2px;width:80px">总支出</div><div class="gh" style="left:1539.2px;width:118px">预期开始时间</div><div class="gh" style="left:1657.2px;width:118px">已预定完成时间</div><div class="gh" style="left:1775.2px;width:80px">执行状态</div><div class="gh" style="left:1855.2px;width:90px">项目经理</div></div></div>
<div style="position:absolute;left:898.4px;top:246.3px;width:1.6px;height:165px;background:#fff"></div>
<div style="position:absolute;left:806.5px;top:-2px;width:39.5px;height:14px;border:1.2px solid #e8342c"></div>
<div style="position:absolute;left:802px;top:240.3px;width:44px;height:20px;border:1.2px solid #e8342c"></div>
</body></html>
